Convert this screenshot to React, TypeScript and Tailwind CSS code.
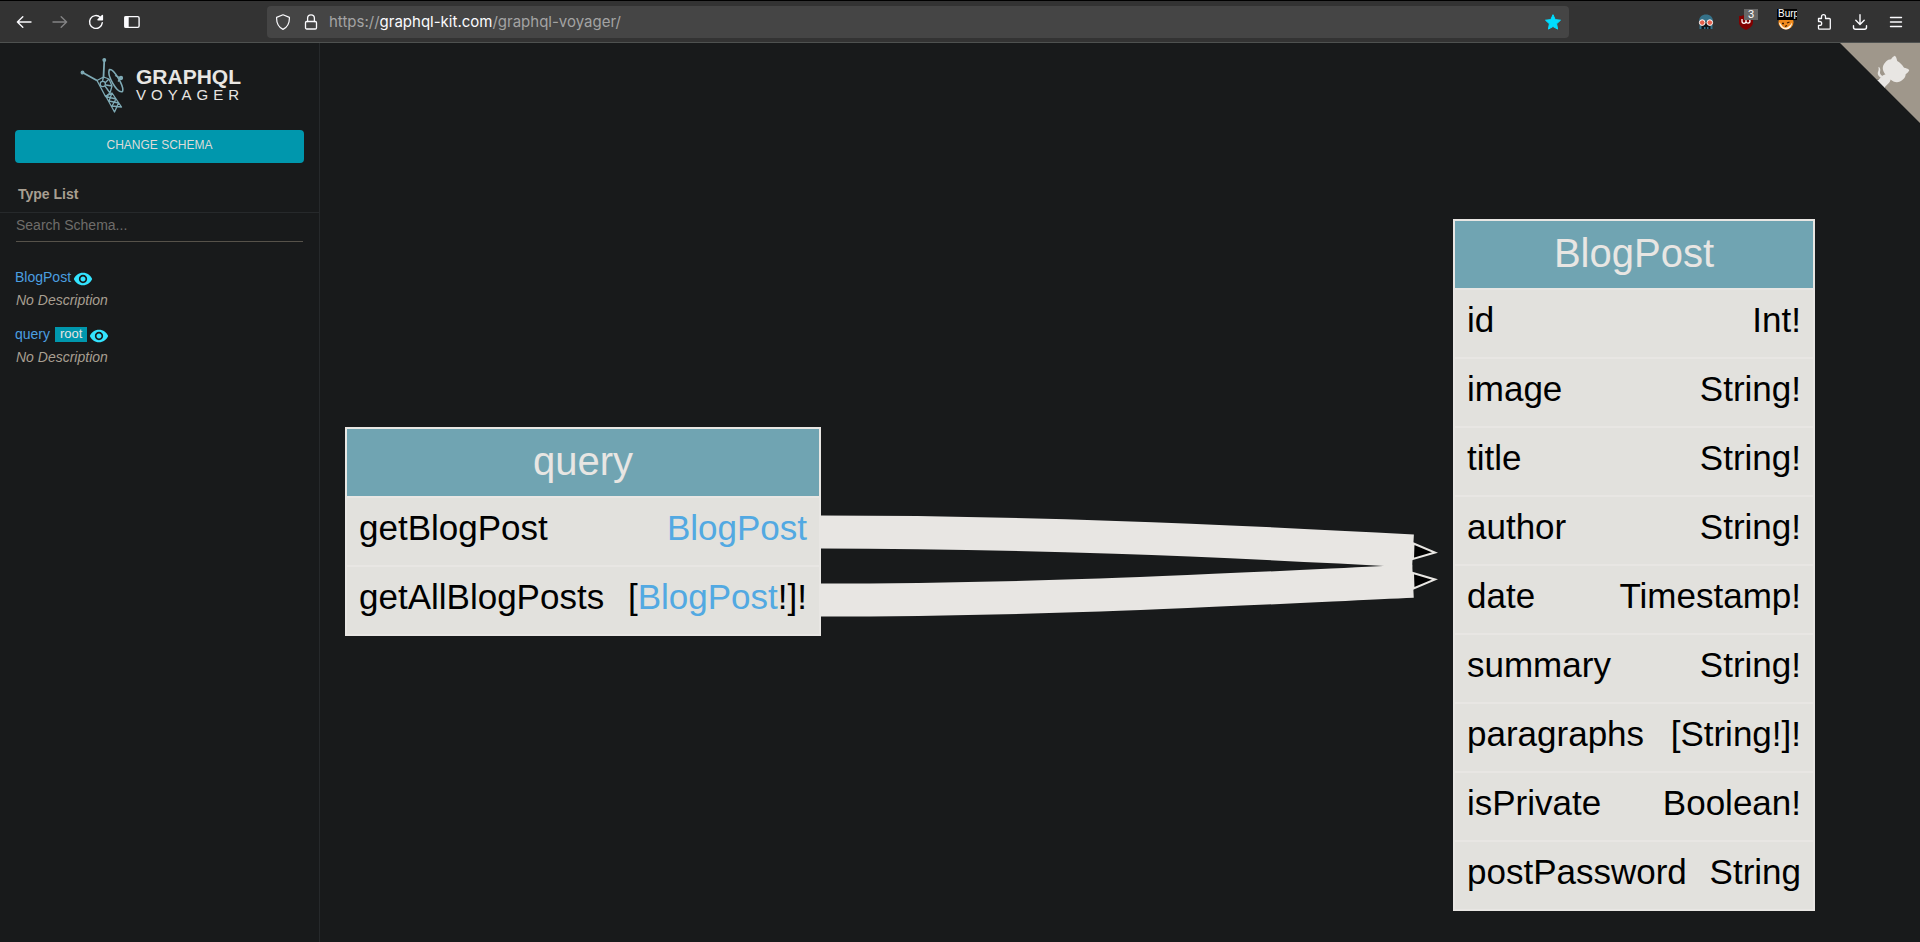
import React from "react";

type Field = { name: string; type: string; linked?: boolean; list?: boolean };

const queryFields: Field[] = [
  { name: "getBlogPost", type: "BlogPost", linked: true },
  { name: "getAllBlogPosts", type: "BlogPost", linked: true, list: true },
];

const blogPostFields: Field[] = [
  { name: "id", type: "Int!" },
  { name: "image", type: "String!" },
  { name: "title", type: "String!" },
  { name: "author", type: "String!" },
  { name: "date", type: "Timestamp!" },
  { name: "summary", type: "String!" },
  { name: "paragraphs", type: "[String!]!" },
  { name: "isPrivate", type: "Boolean!" },
  { name: "postPassword", type: "String" },
];

function Node({ title, fields, place }: { title: string; fields: Field[]; place: string }) {
  return (
    <table className={`absolute block border-2 border-[#e8e6e3] bg-[#e2e1dd] text-black ${place}`}>
      <thead className="block">
        <tr className="block h-[69px] border-b-2 border-[#e8e6e3] bg-[#70a4b2]">
          <th colSpan={2} className="block p-0 text-center text-[40px] leading-[64px] font-normal text-[#e8e6e3]">
            {title}
          </th>
        </tr>
      </thead>
      <tbody className="block text-[35px] leading-[60px]">
        {fields.map((f) => (
          <tr
            key={f.name}
            className="flex h-[69px] justify-between border-b-2 border-[#e8e6e3] px-3 last:h-[67px] last:border-b-0"
          >
            <td className="p-0">{f.name}</td>
            <td className="p-0 whitespace-nowrap">
              {f.list && "["}
              {f.linked ? <a href="#BlogPost" className="text-[#52a9e2]">{f.type}</a> : f.type}
              {f.list && "!]!"}
            </td>
          </tr>
        ))}
      </tbody>
    </table>
  );
}

function Eye() {
  return (
    <svg viewBox="0 0 24 24" className="size-5 fill-[#33e4ff]" aria-hidden="true">
      <path d="M12 4.5C7 4.5 2.73 7.61 1 12c1.73 4.39 6 7.5 11 7.5s9.27-3.11 11-7.5c-1.73-4.39-6-7.5-11-7.5zM12 17c-2.76 0-5-2.24-5-5s2.24-5 5-5 5 2.24 5 5-2.24 5-5 5zm0-8c-1.66 0-3 1.34-3 3s1.34 3 3 3 3-1.34 3-3-1.34-3-3-3z" />
    </svg>
  );
}

function BarButton({ label, children }: { label: string; children: React.ReactNode }) {
  return (
    <button type="button" aria-label={label} className="flex size-4 items-center justify-center">
      {children}
    </button>
  );
}

const stroke = { fill: "none", stroke: "#fbfbfe", strokeWidth: 1.4, strokeLinecap: "round", strokeLinejoin: "round" } as const;

function BrowserBar() {
  return (
    <header className="flex h-[43px] shrink-0 items-center border-t border-b border-t-black border-b-[#4e5150] bg-[#333333] pr-4 pl-4">
      <nav className="flex items-center gap-5">
        <BarButton label="Back">
          <svg viewBox="0 0 16 16" className="size-4 shrink-0" {...stroke}><path d="M15 8H1.4M6.8 2.8 1.4 8l5.4 5.2" /></svg>
        </BarButton>
        <BarButton label="Forward">
          <svg viewBox="0 0 16 16" className="size-4 shrink-0 opacity-40" {...stroke}><path d="M1 8h13.6M9.2 2.8 14.6 8l-5.4 5.2" /></svg>
        </BarButton>
        <BarButton label="Reload">
          <svg viewBox="0 0 16 16" className="size-4 shrink-0" {...stroke}>
            <path d="M14.3 8.6A6.4 6.4 0 1 1 12.4 3.4" />
            <path d="M14.4 1.4v4.4H10z" fill="#fbfbfe" />
          </svg>
        </BarButton>
        <BarButton label="Sidebar">
          <svg viewBox="0 0 16 16" className="size-4 shrink-0" {...stroke}>
            <rect x="0.9" y="2.6" width="14.2" height="10.8" rx="1.4" />
            <path d="M1 3h3v10H1z" fill="#fbfbfe" />
          </svg>
        </BarButton>
      </nav>
      <div className="ml-[127px] flex h-8 min-w-0 flex-1 items-center rounded bg-[#454545] px-2">
        <svg viewBox="0 0 16 16" className="size-4 shrink-0" {...stroke} strokeWidth={1.2}>
          <path d="M8 .8 14.4 3.4C14.6 8.6 12.2 13.2 8 15.4 3.8 13.2 1.4 8.6 1.6 3.4z" />
        </svg>
        <svg viewBox="0 0 16 16" className="ml-3 size-4 shrink-0" {...stroke} strokeWidth={1.3}>
          <rect x="2.5" y="7.5" width="11" height="7.5" rx="1.2" />
          <path d="M4.6 7.5V4.2a3.4 3.4 0 0 1 6.8 0v3.3" />
        </svg>
        <div className="ml-[10px] flex-1 pt-0.5 font-[Inter,sans-serif] text-[15px] text-[#a3a3a3]">
          https://<span className="text-[#fbfbfe]">graphql-kit.com</span>/graphql-voyager/
        </div>
        <svg viewBox="0 0 16 16" className="size-4 shrink-0 fill-[#00ddff] stroke-[#00ddff] stroke-1" strokeLinejoin="round">
          <path d="m8 .7 2.2 4.9 5.3.6-3.9 3.6 1 5.3L8 12.5l-4.6 2.6 1-5.3L.5 6.2l5.3-.6z" />
        </svg>
      </div>
      <div className="ml-[129px] flex items-center gap-6">
        <BarButton label="Privacy mask">
          <svg viewBox="0 0 16 16" className="size-4 shrink-0">
            <path d="M1 7.5C1 3 4 .6 8 .6s7 2.4 7 6.9z" fill="#35728a" />
            <path d="M3 10h10v5H3z" fill="#10161a" />
            <path d="M1.5 11h2v4h-2zM12.5 11h2v4h-2zM6 13h1.5v2H6zM9 13h1.5v2H9z" fill="#35728a" />
            <circle cx="4.2" cy="8.6" r="2.8" fill="#e5604b" stroke="#fff" strokeWidth="1" />
            <circle cx="11.8" cy="8.6" r="2.8" fill="#e5604b" stroke="#fff" strokeWidth="1" />
          </svg>
        </BarButton>
        <span className="relative">
          <BarButton label="Content blocker">
            <svg viewBox="0 0 16 16" className="size-4 shrink-0">
              <path d="M8 0c2 1.5 4 2 7 2v6c0 4-3 6.200-7 8-4-1.800-7-4-7-8V2c3 0 5-.5 7-2z" fill="#800000" />
              <path d="M4 5v2.3a2 2 0 0 0 4 0V5m0 2.3a2 2 0 1 0 2-2.2" fill="none" stroke="#fff" strokeWidth="1.3" />
            </svg>
          </BarButton>
          <span className="absolute -top-[5px] left-[6px] h-[11px] w-[14px] bg-[#666] text-center font-['Liberation_Sans',sans-serif] text-[11px] leading-[11px] text-white">3</span>
        </span>
        <span className="relative">
          <BarButton label="Proxy switcher">
            <svg viewBox="0 0 16 16" className="size-4 shrink-0">
              <circle cx="8" cy="8" r="7.6" fill="#f08a1c" />
              <path d="M1 8.500c2 .5 2.500 4 5 5s6-1 8-5c0 4-2.500 7-6 7s-6.500-3-7-7z" fill="#fff3e0" />
              <path d="M5 10.500c2 3 5 2 6.500-1.500L9 11z" fill="#f08a1c" />
              <path d="M4 9.500h2M9 9l2.500-1M7 12.500l2-1" stroke="#3a1c00" strokeWidth="1.300" />
            </svg>
          </BarButton>
          <span className="absolute -top-[5px] -left-px h-[11px] w-5 overflow-hidden bg-black pl-px font-['Liberation_Sans',sans-serif] text-[10px] leading-[10px] text-white">Burp</span>
        </span>
      </div>
      <div className="ml-[22px] flex items-center gap-5">
        <BarButton label="Extensions">
          <svg viewBox="0 0 16 16" className="size-4 shrink-0" {...stroke} strokeWidth={1.3}>
            <path d="M2.500 4.500h3V2.700a2 2 0 0 1 4 0v1.800h3.800a1 1 0 0 1 1 1v8.700a1 1 0 0 1-1 1H3.500a1 1 0 0 1-1-1v-2.900h1.300a1.900 1.900 0 0 0 0-3.800H2.500z" />
          </svg>
        </BarButton>
        <BarButton label="Downloads">
          <svg viewBox="0 0 16 16" className="size-4 shrink-0" {...stroke}><path d="M8 .7v9.6M3.800 6.300 8 10.400l4.200-4.100M1.500 11.700v1.500a2 2 0 0 0 2 2h9a2 2 0 0 0 2-2v-1.500" /></svg>
        </BarButton>
        <BarButton label="Menu">
          <svg viewBox="0 0 16 16" className="size-4 shrink-0" {...stroke}><path d="M2.500 3.500h11M2.500 8h11M2.500 12.500h11" /></svg>
        </BarButton>
      </div>
    </header>
  );
}

function ProbeLogo() {
  return (
    <svg viewBox="0 0 44 56" className="h-14 w-11 shrink-0" fill="none" stroke="#7fabb6" strokeWidth="1.3" strokeLinejoin="round" aria-hidden="true">
      <circle cx="2.5" cy="14.500" r="1.300" fill="#7fabb6" />
      <circle cx="24.300" cy="2" r="1.300" fill="#7fabb6" />
      <path d="M2.500 14.500 17 22.500M24.300 2 23.500 19" strokeWidth="1.800" />
      <path d="M17 22.500 23.500 19 29 21 32 28 30 35 25.500 38.500zM23.500 19l-1 4M29 21l-4 4M32 28l-6-1M25 28l5 7" />
      <circle cx="22.800" cy="26" r="2.600" />
      <path d="M29.500 11.500C26.500 17 37 35.500 42.500 33.500C44.500 29 34 10.500 29.500 11.500z" strokeWidth="1.600" />
      <path d="M35 17.500l6 2.500M38 23.500l3-3.500" />
      <circle cx="41" cy="20" r="1.500" fill="#7fabb6" />
      <path d="M26 38.500l6-3.500 9.500 14-4.500-.5-2.500 5.500zM26 38.500l10 2.500M29 43l3-8M29 43l9.500 2M32 48l4-7M32 48l9.500 1M34.500 54l4-9" />
    </svg>
  );
}

function TypeItem({ name, root }: { name: string; root?: boolean }) {
  return (
    <li className="h-[57px]">
      <div className="flex h-5 items-center">
        <a href={`#${name}`} className="text-[#4b9fe0]">{name}</a>
        {root && <span className="ml-[5px] h-[15px] bg-[#0097ad] px-[5px] text-[13px] leading-[14px] text-[#e8e6e3]">root</span>}
        <button type="button" aria-label={`Focus ${name}`} className="mt-1 ml-[2px]"><Eye /></button>
      </div>
      <p className="mt-[3px] pl-px leading-5 text-[#a89f91] italic">No Description</p>
    </li>
  );
}

function Sidebar() {
  return (
    <aside className="flex w-80 shrink-0 flex-col border-r border-[#26292b] text-sm">
      <div className="flex items-center gap-3 pt-[15px] pl-20">
        <ProbeLogo />
        <h1 className="pb-1 text-[#e8e6e3]">
          <span className="block text-[21px] leading-[21px] font-bold">GRAPHQL</span>
          <span className="block text-[15px] leading-4 tracking-[5px]">VOYAGER</span>
        </h1>
      </div>
      <button type="button" className="mx-[15px] mt-4 h-[33px] rounded bg-[#0097ad] pb-1 text-xs text-[#dedbd7]">CHANGE SCHEMA</button>
      <h2 className="mt-[17px] h-[33px] border-b border-[#26292b] pl-[18px] leading-7 font-bold text-[#a89f91]">Type List</h2>
      <input
        type="text"
        aria-label="Search Schema"
        placeholder="Search Schema..."
        className="mx-4 h-[29px] border-b border-[#56524a] bg-transparent pb-1 text-[#e8e6e3] outline-none placeholder:text-[#6f6d6a]"
      />
      <ul className="px-[15px] pt-[25px]">
        <TypeItem name="BlogPost" />
        <TypeItem name="query" root />
      </ul>
    </aside>
  );
}

function Canvas() {
  return (
    <main className="relative min-w-0 flex-1 overflow-hidden">
      <svg viewBox="0 0 640 120" className="absolute top-[457px] left-[500px] h-[120px] w-[640px]" aria-hidden="true">
        <g fill="none" stroke="#e8e6e3" strokeWidth="33">
          <path d="M1 32C200 32 390 40 593 51" />
          <path d="M1 100C220 100 380 91 593 81.300" />
        </g>
        <g fill="#000" stroke="#e8e6e3" strokeWidth="2">
          <path d="M593.500 43.500 615 52.500 593 59z" />
          <path d="M593 73 615 79.500 593.500 88.500z" />
        </g>
      </svg>
      <Node title="query" fields={queryFields} place="top-[384px] left-[25px] w-[476px]" />
      <Node title="BlogPost" fields={blogPostFields} place="top-[176px] left-[1133px] w-[362px]" />
      <a href="https://github.com" aria-label="View source on GitHub" className="absolute top-0 right-0">
        <svg viewBox="0 0 250 250" className="size-20" aria-hidden="true">
          <path d="M0 0 115 115 130 115 142 142 250 250V0z" fill="#9f978b" />
          <g fill="#e8e6e3">
            <path d="M128.300 109C113.800 99.700 119 89.600 119 89.600 122 82.700 120.500 78.600 120.500 78.600 119.200 72 123.400 76.300 123.400 76.300 127.300 80.900 125.500 87.300 125.500 87.300 122.900 97.600 130.600 101.900 134.400 103.200" />
            <path d="M115 115c-.1.100 3.700 1.500 4.800.4l13.900-13.800c3.200-2.400 6.200-3.200 8.500-3-8.400-10.600-14.700-24.200 1.600-40.600 4.700-4.600 10.200-6.800 15.900-7 .6-1.600 3.500-7.400 11.700-10.900 0 0 4.700 2.400 7.400 16.100 4.300 2.400 8.400 5.600 12.100 9.200 3.600 3.600 6.800 7.800 9.200 12.200 13.700 2.600 16.200 7.300 16.200 7.300-3.600 8.200-9.400 11.100-10.900 11.700-.3 5.800-2.400 11.200-7.100 15.900-16.400 16.400-30 10-40.600 1.600.2 2.800-1 6.800-5 10.800L141 136.500c-1.200 1.200.6 5.400.8 5.300z" />
          </g>
        </svg>
      </a>
    </main>
  );
}

export default function App() {
  return (
    <div className="flex min-h-screen flex-col bg-[#181a1b] font-['Liberation_Sans',Arial,sans-serif]">
      <BrowserBar />
      <div className="flex min-h-[899px] flex-1">
        <Sidebar />
        <Canvas />
      </div>
    </div>
  );
}
